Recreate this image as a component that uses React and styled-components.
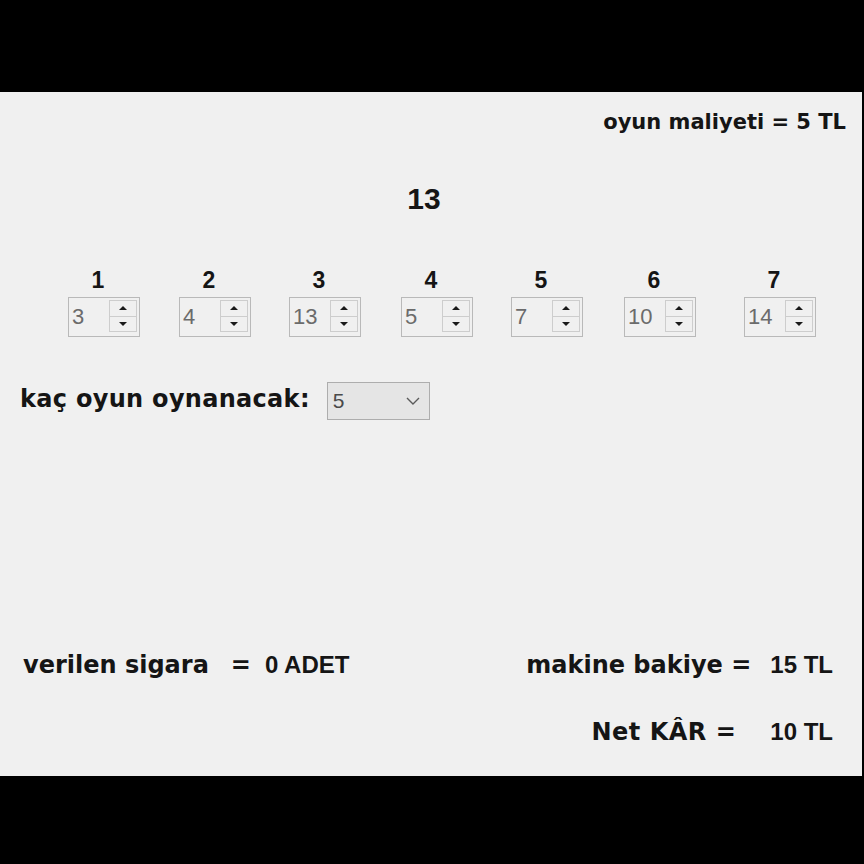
import React from "react";
import styled, { createGlobalStyle } from "styled-components";

const GlobalStyle = createGlobalStyle`
  html, body {
    margin: 0;
    padding: 0;
    background: #000;
  }
  body {
    width: 864px;
    height: 864px;
    overflow: hidden;
  }
`;

const WIDE = `"DejaVu Sans", "Liberation Sans", sans-serif`;
const NARROW = `"Liberation Sans", Arial, sans-serif`;

const Screen = styled.div`
  width: 864px;
  height: 864px;
  padding-top: 92px;
  box-sizing: border-box;
  background: #000;
`;

const Form = styled.div`
  width: 862px;
  height: 684px;
  background: #f0f0f0;
  display: flex;
  flex-direction: column;
  color: #151515;
  font-family: ${NARROW};
`;

const Caption = styled.span`
  font-family: ${(p) => (p.$wide ? WIDE : NARROW)};
  font-weight: bold;
  font-size: ${(p) => p.$size || 24}px;
  line-height: ${(p) => p.$line || 30}px;
  letter-spacing: ${(p) => p.$track || 0}px;
  white-space: pre;
  margin-left: ${(p) => p.$gap || 0}px;
`;

const CostRow = styled.div`
  display: flex;
  justify-content: flex-end;
  margin-top: 17px;
  padding-right: 16px;
`;

const ScoreRow = styled.div`
  display: flex;
  justify-content: center;
  margin-top: 47px;
  padding-right: 14px;
`;

const SpinRow = styled.div`
  display: flex;
  margin-top: 51px;
`;

const SpinColumn = styled.div`
  display: flex;
  flex-direction: column;
  align-items: center;
  width: 72px;
  margin-left: ${(p) => p.$offset}px;
`;

const SpinLabel = styled.span`
  font-weight: bold;
  font-size: 23px;
  line-height: 26px;
  margin-right: 12px;
`;

const SpinBox = styled.div`
  width: 72px;
  height: 40px;
  box-sizing: border-box;
  margin-top: 4px;
  border: 1px solid #b9b9b9;
  background: #f0f0f0;
  display: flex;
  align-items: center;
`;

const SpinValue = styled.span`
  flex: 1;
  padding-left: 3px;
  font-size: 22px;
  color: #6b6b6b;
`;

const SpinButtons = styled.div`
  align-self: flex-start;
  display: flex;
  flex-direction: column;
  width: 28px;
  height: 32px;
  margin: 2px 2px 0 0;
  box-sizing: border-box;
  border: 1px solid #cdcdcd;
`;

const SpinButton = styled.div`
  flex: 1;
  display: flex;
  align-items: center;
  justify-content: center;
  & + & {
    border-top: 1px solid #cdcdcd;
  }
  &::after {
    content: "";
    border-left: 4px solid transparent;
    border-right: 4px solid transparent;
    ${(p) =>
      p.$dir === "up"
        ? "border-bottom: 4px solid #1a1a1a;"
        : "border-top: 4px solid #1a1a1a;"}
  }
`;

const ComboRow = styled.div`
  display: flex;
  align-items: flex-start;
  margin-top: 45px;
  padding-left: 20px;
`;

const ComboLabel = styled(Caption)`
  margin-top: 2px;
  letter-spacing: 0.3px;
`;

const Combo = styled.div`
  width: 103px;
  height: 38px;
  box-sizing: border-box;
  margin-left: 17px;
  padding: 0 9px 0 5px;
  border: 1px solid #adadad;
  background: #e5e5e5;
  display: flex;
  align-items: center;
  justify-content: space-between;
`;

const ComboValue = styled.span`
  font-size: 21px;
  color: #4a4a4a;
`;

const Footer = styled.div`
  margin-top: auto;
  padding: 0 29px 29px 23px;
  display: flex;
  flex-direction: column;
  gap: 37px;
`;

const FooterRow = styled.div`
  display: flex;
  justify-content: ${(p) => (p.$end ? "flex-end" : "space-between")};
  align-items: baseline;
`;

const Group = styled.div`
  display: flex;
  align-items: baseline;
`;

const spins = [
  { label: "1", value: 3, offset: 68 },
  { label: "2", value: 4, offset: 39 },
  { label: "3", value: 13, offset: 38 },
  { label: "4", value: 5, offset: 40 },
  { label: "5", value: 7, offset: 38 },
  { label: "6", value: 10, offset: 41 },
  { label: "7", value: 14, offset: 48 },
];

function Chevron() {
  return (
    <svg width="14" height="8" viewBox="0 0 14 8">
      <path d="M1 1 L7 7 L13 1" fill="none" stroke="#5a5a5a" strokeWidth="1.4" />
    </svg>
  );
}

export default function App() {
  return (
    <Screen>
      <GlobalStyle />
      <Form>
        <CostRow>
          <Caption $wide $size={21} $line={26}>
            oyun maliyeti = 5 TL
          </Caption>
        </CostRow>

        <ScoreRow>
          <Caption $size={30} $line={34}>
            13
          </Caption>
        </ScoreRow>

        <SpinRow>
          {spins.map((s) => (
            <SpinColumn key={s.label} $offset={s.offset}>
              <SpinLabel>{s.label}</SpinLabel>
              <SpinBox>
                <SpinValue>{s.value}</SpinValue>
                <SpinButtons>
                  <SpinButton $dir="up" />
                  <SpinButton $dir="down" />
                </SpinButtons>
              </SpinBox>
            </SpinColumn>
          ))}
        </SpinRow>

        <ComboRow>
          <ComboLabel $wide>kaç oyun oynanacak:</ComboLabel>
          <Combo>
            <ComboValue>5</ComboValue>
            <Chevron />
          </Combo>
        </ComboRow>

        <Footer>
          <FooterRow>
            <Group>
              <Caption $wide>verilen sigara</Caption>
              <Caption $wide $gap={22}>=</Caption>
              <Caption $gap={14}>0 ADET</Caption>
            </Group>
            <Group>
              <Caption $wide>makine bakiye =</Caption>
              <Caption $gap={19}>15 TL</Caption>
            </Group>
          </FooterRow>
          <FooterRow $end>
            <Caption $wide $track={0.5}>Net KÂR =</Caption>
            <Caption $gap={34}>10 TL</Caption>
          </FooterRow>
        </Footer>
      </Form>
    </Screen>
  );
}
